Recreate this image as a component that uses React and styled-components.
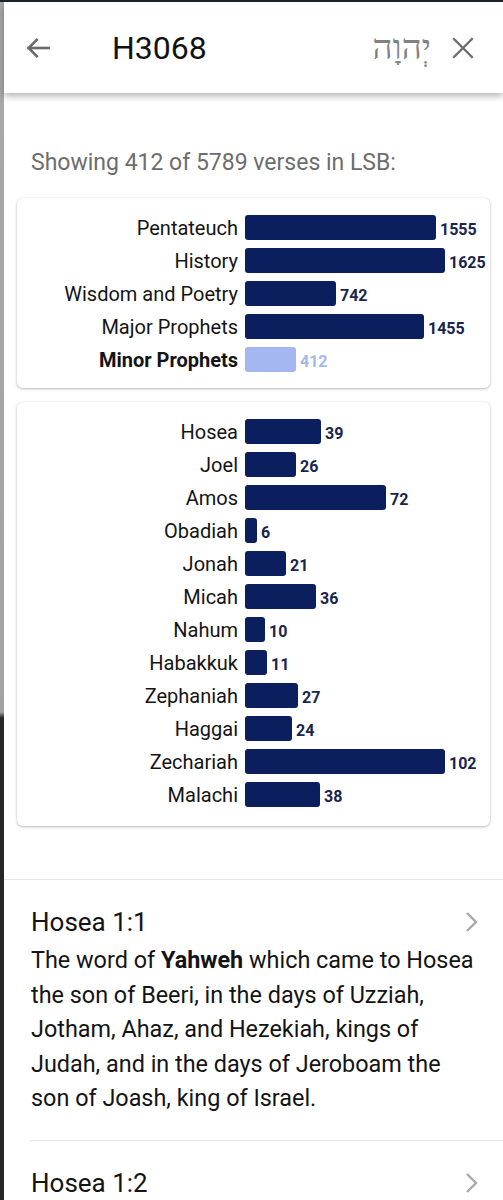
import React from 'react'
import styled, {createGlobalStyle} from "styled-components";

const GlobalStyle = createGlobalStyle`
  html, body {
    margin: 0;
    padding: 0;
    background: #ffffff;
  }
  body {
    font-family: Roboto, "Noto Sans", "Liberation Sans", sans-serif;
  }
`;

const TESTAMENT_GROUPS = [
    {name: 'Pentateuch', count: 1555},
    {name: 'History', count: 1625},
    {name: 'Wisdom and Poetry', count: 742},
    {name: 'Major Prophets', count: 1455},
    {name: 'Minor Prophets', count: 412, active: true},
];

const BOOKS = [
    {name: 'Hosea', count: 39},
    {name: 'Joel', count: 26},
    {name: 'Amos', count: 72},
    {name: 'Obadiah', count: 6},
    {name: 'Jonah', count: 21},
    {name: 'Micah', count: 36},
    {name: 'Nahum', count: 10},
    {name: 'Habakkuk', count: 11},
    {name: 'Zephaniah', count: 27},
    {name: 'Haggai', count: 24},
    {name: 'Zechariah', count: 102},
    {name: 'Malachi', count: 38},
];

const BAR_MAX = 200;

const Screen = styled.div`
  display: flex;
  min-height: 1200px;
  border-top: 2px solid #1d2430;
`;

const EdgeStrip = styled.div`
  width: 4px;
  flex-shrink: 0;
  background: linear-gradient(to bottom, #a9a9a9 0px, #a2a2a2 710px, #262626 716px, #262626 100%);
`;

const Sheet = styled.div`
  flex: 1;
  display: flex;
  flex-direction: column;
  background: #fff;
`;

const Header = styled.header`
  height: 91px;
  display: flex;
  align-items: center;
  padding: 0 24px 0 18px;
  background: #fff;
  box-shadow: 0 3px 7px rgba(0, 0, 0, 0.3);
  position: relative;
  z-index: 1;
`;

const IconButton = styled.button`
  border: none;
  background: none;
  padding: 0;
  width: 32px;
  height: 32px;
  display: flex;
  align-items: center;
  justify-content: center;
  color: #6a6a6a;
`;

const Title = styled.h1`
  margin: 0 0 0 58px;
  flex: 1;
  font-size: 32px;
  font-weight: 400;
  color: #111;
`;

const HebrewWord = styled.span`
  font-family: "Liberation Serif", "DejaVu Serif", serif;
  font-size: 35px;
  color: #808080;
  margin-right: 16px;
  direction: rtl;
`;

const Content = styled.main`
  padding: 56px 13px 0;
`;

const Summary = styled.p`
  margin: 0 0 21px 14px;
  font-size: 23px;
  line-height: 28px;
  color: #6d6d6d;
`;

const ChartCard = styled.section`
  background: #fff;
  border-radius: 6px;
  box-shadow: 0 1px 3px rgba(0, 0, 0, 0.28), 0 0 1px rgba(0, 0, 0, 0.08);
  padding: 17px 0 ${p => p.$bottom}px;
  display: flex;
  flex-direction: column;
  gap: 8px;
  margin-bottom: 14px;
`;

const BarRow = styled.div`
  display: flex;
  align-items: center;
  height: 25px;
`;

const BarLabel = styled.span`
  width: 228px;
  text-align: right;
  padding-right: 7px;
  box-sizing: border-box;
  font-size: 20px;
  color: #141414;
  font-weight: ${p => (p.$active ? 700 : 400)};
  white-space: nowrap;
`;

const Bar = styled.div`
  height: 25px;
  border-radius: 3px;
  background: ${p => (p.$active ? '#a4b7f1' : '#0b1f5e')};
`;

const BarValue = styled.span`
  margin-left: 4px;
  padding-top: 4px;
  font-size: 16px;
  font-weight: 700;
  color: ${p => (p.$active ? '#a4b7f1' : '#18254d')};
`;

const Divider = styled.hr`
  border: none;
  border-top: 1px solid #e6e6e6;
  margin: ${p => (p.$inset ? '0 0 0 26px' : '0')};
`;

const VerseList = styled.div`
  margin-top: 39px;
`;

const VerseItem = styled.article`
  padding: 26px 24px 24px 27px;
`;

const VerseHead = styled.div`
  display: flex;
  align-items: center;
  justify-content: space-between;
`;

const VerseRef = styled.h2`
  margin: 0;
  font-size: 26px;
  font-weight: 400;
  line-height: 32px;
  color: #141414;
`;

const VerseText = styled.p`
  margin: 5px 0 0;
  font-size: 23.4px;
  line-height: 34.6px;
  color: #141414;

  b {
    font-weight: 700;
  }
`;

function BackIcon() {
    return (
        <svg width="30" height="30" viewBox="0 0 24 24" fill="none" stroke="currentColor" strokeWidth="2.1" strokeLinecap="square">
            <path d="M20.5 12H4.5"/>
            <path d="M11 5.5L4.5 12l6.5 6.5"/>
        </svg>
    )
}

function CloseIcon() {
    return (
        <svg width="26" height="26" viewBox="0 0 24 24" fill="none" stroke="currentColor" strokeWidth="2.2">
            <path d="M3 3l18 18M21 3L3 21"/>
        </svg>
    )
}

function ChevronIcon() {
    return (
        <svg width="14" height="22" viewBox="0 0 14 22" fill="none" stroke="#a8a8a8" strokeWidth="2.4">
            <path d="M2 2l9 9-9 9"/>
        </svg>
    )
}

function BarChart({rows, bottom}) {
    const max = Math.max(...rows.map(r => r.count));
    return (
        <ChartCard $bottom={bottom}>
            {rows.map(r => (
                <BarRow key={r.name}>
                    <BarLabel $active={r.active}>{r.name}</BarLabel>
                    <Bar $active={r.active} style={{width: Math.round(r.count / max * BAR_MAX)}}/>
                    <BarValue $active={r.active}>{r.count}</BarValue>
                </BarRow>
            ))}
        </ChartCard>
    )
}

export default function App() {
    return (
        <>
            <GlobalStyle/>
            <Screen>
                <EdgeStrip/>
                <Sheet>
                    <Header>
                        <IconButton aria-label="back"><BackIcon/></IconButton>
                        <Title>H3068</Title>
                        <HebrewWord>יְהוָה</HebrewWord>
                        <IconButton aria-label="close"><CloseIcon/></IconButton>
                    </Header>
                    <Content>
                        <Summary>Showing 412 of 5789 verses in LSB:</Summary>
                        <BarChart rows={TESTAMENT_GROUPS} bottom={16}/>
                        <BarChart rows={BOOKS} bottom={19}/>
                    </Content>
                    <VerseList>
                        <Divider/>
                        <VerseItem>
                            <VerseHead>
                                <VerseRef>Hosea 1:1</VerseRef>
                                <ChevronIcon/>
                            </VerseHead>
                            <VerseText>
                                The word of <b>Yahweh</b> which came to Hosea the son of Beeri, in the days of Uzziah,
                                Jotham, Ahaz, and Hezekiah, kings of Judah, and in the days of Jeroboam the son of
                                Joash, king of Israel.
                            </VerseText>
                        </VerseItem>
                        <Divider $inset/>
                        <VerseItem>
                            <VerseHead>
                                <VerseRef>Hosea 1:2</VerseRef>
                                <ChevronIcon/>
                            </VerseHead>
                        </VerseItem>
                    </VerseList>
                </Sheet>
            </Screen>
        </>
    )
}
